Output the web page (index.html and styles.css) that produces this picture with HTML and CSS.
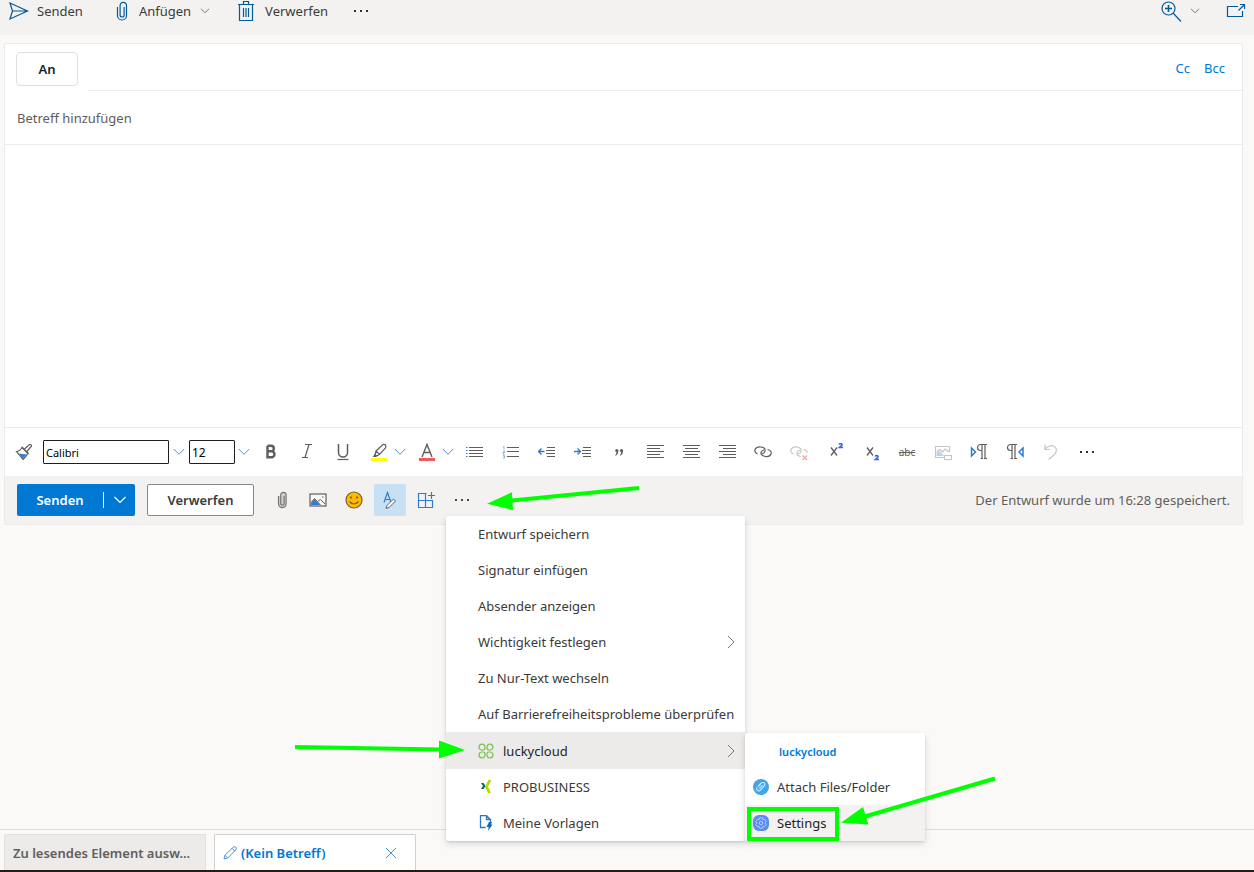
FILE: index.html
```html
<!DOCTYPE html>
<html lang="de">
<head>
<meta charset="utf-8">
<meta name="viewport" content="width=device-width, initial-scale=1">
<title>(Kein Betreff)</title>
<link rel="stylesheet" href="styles.css">
</head>
<body>
<header class="topbar">
  <button class="command command-send" type="button">
    <svg width="20" height="20" viewBox="0 0 20 20" class="line-blue"><path d="M1 2 18.500 10 1 18 3.500 10ZM3.500 10H18"/></svg>
    Senden
  </button>
  <button class="command command-attach" type="button">
    <svg width="12" height="20" viewBox="0 0 12 20" class="line-blue"><path d="M1.500 6V14.500a4.500 4.500 0 0 0 9 0V4.500a3.200 3.200 0 0 0-6.400 0V14a2 2 0 0 0 4 0V6" /></svg>
    Anfügen
    <svg width="10" height="6" viewBox="0 0 10 6" class="line-gray"><path d="M1 .8 5 4.800 9 .8"/></svg>
  </button>
  <button class="command command-discard" type="button">
    <svg width="18" height="22" viewBox="0 0 18 22" class="line-blue"><path d="M1 4.500H17M6.500 4V1.500H11.500V4M2.500 4.500V20.500H15.500V4.500M6.500 8V17M9 8V17M11.500 8V17"/></svg>
    Verwerfen
  </button>
  <button class="command" type="button" aria-label="Weitere Befehle">
    <svg width="16" height="4" viewBox="0 0 16 4" fill="#323130"><rect x="0" y="1" width="2" height="2"/><rect x="6" y="1" width="2" height="2"/><rect x="12" y="1" width="2" height="2"/></svg>
  </button>
  <button class="command command-zoom" type="button" aria-label="Zoom">
    <svg width="21" height="21" viewBox="0 0 21 21" class="line-blue"><circle cx="7.500" cy="7.500" r="6.500"/><path d="M12 12 20 20.500"/><path d="M4 7.500H11M7.500 4V11" stroke-width="1.600"/></svg>
    <svg width="10" height="6" viewBox="0 0 10 6" class="line-gray"><path d="M1 .8 5 4.800 9 .8"/></svg>
  </button>
  <button class="command" type="button" aria-label="In neuem Fenster öffnen">
    <svg width="20" height="16" viewBox="0 0 20 16" class="line-blue"><path d="M12 3.500H1.500V13.500H16.500V8M12.500 7.500 18 2M14 1.500H18.500V6"/></svg>
  </button>
</header>

<main class="page">
  <form class="compose">
    <div class="to-row">
      <button class="to-button" type="button">An</button>
      <div class="to-field">
        <input class="plain-input" type="text" aria-label="An">
        <a class="cc-link" href="#cc">Cc</a>
        <a class="cc-link" href="#bcc">Bcc</a>
      </div>
    </div>
    <input class="plain-input subject" type="text" placeholder="Betreff hinzufügen" aria-label="Betreff">
    <textarea class="message" aria-label="Nachrichtentext"></textarea>

    <div class="format-bar">
      <button class="brush" type="button" aria-label="Format übertragen">
        <svg width="18" height="18" viewBox="0 0 18 18" class="line-ink"><path d="M1.500 8.500Q5 8 7.500 4.500L13 10Q11 14 8 16.500Z" fill="#fff"/><path d="M4 10.500 11.500 11.500 8 15.500Z" fill="#2b7cd3" stroke="none"/><path d="M6.500 4 13.500 11M9.500 6 14.500 1.500q2-.5 2 1.500L12 8.500"/></svg>
      </button>
      <input class="font-box font-name" type="text" value="Calibri" aria-label="Schriftart">
      <button class="chevron-name" type="button" aria-label="Schriftart wählen"><svg width="12" height="8" viewBox="0 0 12 8" class="line-light"><path d="M.8 1 6 6.300 11.200 1"/></svg></button>
      <input class="font-box font-size" type="text" value="12" aria-label="Schriftgrad">
      <button class="chevron-size" type="button" aria-label="Schriftgrad wählen"><svg width="12" height="8" viewBox="0 0 12 8" class="line-light"><path d="M.8 1 6 6.300 11.200 1"/></svg></button>
      <button class="tool" type="button" aria-label="Fett"><svg width="18" height="18" viewBox="0 0 18 18" fill="none" stroke="#605e5c" stroke-width="2.400"><path d="M5.500 2.700V14.300H9.500a3 3 0 0 0 0-6H5.500M5.500 8.300H9a2.800 2.800 0 0 0 0-5.600H5.500"/></svg></button>
      <button class="tool" type="button" aria-label="Kursiv"><svg width="18" height="18" viewBox="0 0 18 18" class="line-ink"><path d="M7 1.500H14M4 14.500H10M11 1.500 7 14.500"/></svg></button>
      <button class="tool" type="button" aria-label="Unterstrichen"><svg width="18" height="18" viewBox="0 0 18 18" class="line-ink"><path d="M4.500 1V9.500a4.500 4.500 0 0 0 9 0V1" stroke-width="1.500"/><path d="M3.500 16.500H14.500"/></svg></button>
      <span class="split">
        <button type="button" aria-label="Texthervorhebung"><svg width="18" height="18" viewBox="0 0 18 18" class="line-ink"><rect x="1" y="15" width="16" height="3" fill="#ffff00" stroke="none"/><path d="M6 8 13 1.500q4-.5 2.500 3.500L9.500 11.500ZM6 8 5 11.500 6.500 13 9.500 11.500"/><path d="M5 11 2.500 14H6L7 12.500Z" fill="#605e5c" stroke="none"/></svg></button>
        <button type="button" aria-label="Hervorhebungsfarbe"><svg width="12" height="8" viewBox="0 0 12 8" class="line-light"><path d="M.8 1 6 6.300 11.200 1"/></svg></button>
      </span>
      <span class="split">
        <button type="button" aria-label="Schriftfarbe"><svg width="18" height="18" viewBox="0 0 18 18" class="line-ink"><rect x="1" y="15" width="16" height="3" fill="#ef5b56" stroke="none"/><path d="M4 14 9 1.500 14 14M5.800 9.500H12.200" stroke-width="1.400"/></svg></button>
        <button type="button" aria-label="Schriftfarbe wählen"><svg width="12" height="8" viewBox="0 0 12 8" class="line-light"><path d="M.8 1 6 6.300 11.200 1"/></svg></button>
      </span>
      <button class="tool" type="button" aria-label="Aufzählung"><svg width="18" height="18" viewBox="0 0 18 18" class="line-ink"><path d="M3 4.500H17M3 7.500H17M3 10.500H17M3 13.500H17"/><path d="M0 4.500H1.500M0 7.500H1.500M0 10.500H1.500M0 13.500H1.500" stroke="#2b7cd3"/></svg></button>
      <button class="tool" type="button" aria-label="Nummerierung"><svg width="18" height="18" viewBox="0 0 18 18" class="line-ink"><path d="M5 4.500H17M5 8.500H17M5 13.500H17"/><path d="M1 4 2 3.500V6.500M1 8H2.500V9.500H1V11H2.500M1 12.500H2.500V15H1M1.500 13.700H2.500" stroke="#6fa2e0" stroke-width=".8"/></svg></button>
      <button class="tool" type="button" aria-label="Einzug verkleinern"><svg width="18" height="18" viewBox="0 0 18 18" class="line-ink"><path d="M9 4.500H17M8 7.500H17M8 10.500H17M9 13.500H17"/><path d="M.5 8.500H6.500M3.500 5.500.5 8.500 3.500 11.500" stroke="#2b7cd3" stroke-width="1.300"/></svg></button>
      <button class="tool" type="button" aria-label="Einzug vergrößern"><svg width="18" height="18" viewBox="0 0 18 18" class="line-ink"><path d="M9 4.500H17M8 7.500H17M8 10.500H17M9 13.500H17"/><path d="M0 8.500H6.500M3.500 5.500 6.500 8.500 3.500 11.500" stroke="#2b7cd3" stroke-width="1.300"/></svg></button>
      <button class="tool" type="button" aria-label="Zitat"><svg width="18" height="18" viewBox="0 0 18 18" fill="#605e5c"><circle cx="6.800" cy="7.500" r="1.600"/><circle cx="11.500" cy="7.500" r="1.600"/><path d="M6.500 8H8.400Q8.500 11 5.500 13V12Q6.700 10.500 6.500 8ZM11.200 8H13.100Q13.200 11 10.200 13V12Q11.400 10.500 11.200 8Z"/></svg></button>
      <button class="tool" type="button" aria-label="Linksbündig"><svg width="18" height="18" viewBox="0 0 18 18" class="line-ink"><path d="M1 2.500H18M1 5.500H14M1 8.500H18M1 11.500H14M1 14.500H18"/></svg></button>
      <button class="tool" type="button" aria-label="Zentriert"><svg width="18" height="18" viewBox="0 0 18 18" class="line-ink"><path d="M1 2.500H18M3 5.500H16M1 8.500H18M3 11.500H16M1 14.500H18"/></svg></button>
      <button class="tool" type="button" aria-label="Rechtsbündig"><svg width="18" height="18" viewBox="0 0 18 18" class="line-ink"><path d="M1 2.500H18M5 5.500H18M1 8.500H18M5 11.500H18M1 14.500H18"/></svg></button>
      <button class="tool" type="button" aria-label="Link einfügen"><svg width="18" height="18" viewBox="0 0 18 18" class="line-ink"><path d="M3.500 11Q0 9.500 1 6.500 2.500 3.500 7 4q4.500.5 4 4-.5 2.500-3 2.500M13.500 6.500q4.500 1 3.500 4.500-1 3-5.500 2.500Q6.500 12.500 7 9.500q.5-2 3-2.500"/></svg></button>
      <button class="tool" type="button" aria-label="Link entfernen" disabled><svg width="18" height="18" viewBox="0 0 18 18" class="line-faint"><path d="M3.500 11Q0 9.500 1 6.500 2.500 3.500 7 4q4.500.5 4 4-.5 2.500-3 2.500M13.500 6.500q4 1 3.700 3.500M10.500 13.500Q6.500 12.500 7 9.500q.5-2 3-2.500"/><path d="M12.500 12.500 17 17M17 12.500 12.500 17" stroke="#f0b0a8" stroke-width="1.500"/></svg></button>
      <button class="tool" type="button" aria-label="Hochgestellt"><svg width="18" height="18" viewBox="0 0 18 18" class="line-ink"><path d="M5 4.500 11 12.500M11 4.500 5 12.500" stroke-width="1.300"/><path d="M13 1.500q.5-1 1.800-1 1.500.2 1.200 1.500L13.300 4.500H17" stroke="#2b6cd3" stroke-width="1.500"/></svg></button>
      <button class="tool" type="button" aria-label="Tiefgestellt"><svg width="18" height="18" viewBox="0 0 18 18" class="line-ink"><path d="M5 4.500 11 12.500M11 4.500 5 12.500" stroke-width="1.300"/><path d="M13 13.500q.5-1 1.800-1 1.500.2 1.200 1.500L13.300 16.500H17" stroke="#2b6cd3" stroke-width="1.500"/></svg></button>
      <button class="tool strike" type="button" aria-label="Durchgestrichen"><s>abc</s></button>
      <button class="tool" type="button" aria-label="Bild formatieren" disabled><svg width="18" height="18" viewBox="0 0 18 18" class="line-faint"><path d="M10 14.500H1.500V3.500H15.500V9"/><path d="M2.500 13V9L5 7.500 10 13Z" fill="#b9d3ef" stroke="none"/><path d="M3 8 6 6.500 8.500 9 11 6 15 9"/><rect x="10.500" y="12.500" width="7" height="4"/></svg></button>
      <button class="tool" type="button" aria-label="Von links nach rechts"><svg width="18" height="18" viewBox="0 0 18 18" class="line-ink"><path d="M1.500 5 5.500 9 1.500 13Z" stroke="#2b7cd3" stroke-width="1.500"/><path d="M12 15.500V2M15 15.500V2M17 1.500H10.500a3 3 0 0 0 0 6H12M10.500 15.500H13M14 15.500H17"/></svg></button>
      <button class="tool" type="button" aria-label="Von rechts nach links"><svg width="18" height="18" viewBox="0 0 18 18" class="line-ink"><path d="M17 5 13 9 17 13Z" stroke="#2b7cd3" stroke-width="1.500"/><path d="M6 15.500V2M9 15.500V2M11 1.500H4.500a3 3 0 0 0 0 6H6M4.500 15.500H7M8 15.500H11"/></svg></button>
      <button class="tool" type="button" aria-label="Rückgängig" disabled><svg width="18" height="18" viewBox="0 0 18 18" class="line-faint"><path d="M3 1.500V6.500H8M3 6Q7.500 1.500 11.500 3q4 2 2.500 6-1 2.500-7.500 7.500"/></svg></button>
      <button class="tool" type="button" aria-label="Weitere Formatierung"><svg width="16" height="4" viewBox="0 0 16 4" fill="#323130"><rect x="1" y="1" width="2" height="2"/><rect x="7" y="1" width="2" height="2"/><rect x="13" y="1" width="2" height="2"/></svg></button>
    </div>

    <div class="send-bar">
      <span class="send-split">
        <button class="send-main" type="button">Senden</button>
        <button class="send-more" type="button" aria-label="Sendeoptionen"><svg width="14" height="8" viewBox="0 0 14 8" fill="none" stroke="#fff" stroke-width="1.200"><path d="M1.500 1 7 6.500 12.500 1"/></svg></button>
      </span>
      <button class="discard" type="button">Verwerfen</button>
      <div class="actions">
        <button class="action" type="button" aria-label="Anfügen"><svg width="10" height="18" viewBox="0 0 10 18" fill="#d2d0ce" stroke="#797775" stroke-width="1.200"><path d="M1.500 5V12.800a3.800 3.800 0 0 0 7.600 0V4a2.700 2.700 0 0 0-5.400 0V12.500a1.700 1.700 0 0 0 3.400 0V5"/></svg></button>
        <button class="action" type="button" aria-label="Bild einfügen"><svg width="18" height="18" viewBox="0 0 18 18" class="line-ink"><rect x="1" y="3" width="16" height="12" fill="#f8f8f8"/><path d="M2 12 5.500 8 11 14H2Z" fill="#2b7cd3" stroke="none"/><path d="M2 11.500 5.500 7.500 11.500 14M8.500 10.500 11.500 8.500 16 13" stroke-width="1"/><path d="M13 6H14.500"/></svg></button>
        <button class="action" type="button" aria-label="Emoji"><svg width="18" height="18" viewBox="0 0 18 18"><circle cx="9" cy="9" r="8" fill="#ffb900" stroke="#795f2e" stroke-width="1.200"/><circle cx="6" cy="6.500" r="1.100" fill="#605e5c"/><circle cx="12" cy="6.500" r="1.100" fill="#605e5c"/><path d="M4.500 10.500q4.500 5 9 0" fill="none" stroke="#605e5c" stroke-width="1.200"/></svg></button>
        <button class="action action-on" type="button" aria-label="Formatierungsoptionen" aria-pressed="true"><svg width="18" height="18" viewBox="0 0 18 18" fill="none"><path d="M3 11.500 6.500 1.500 10 11.500M4.200 8.500H9" stroke="#2b7cd3" stroke-width="1.200"/><path d="M6 14.500 12.500 8 14.500 10 8 16.500 5 17.300Z" stroke="#605e5c" fill="#fff"/></svg></button>
        <button class="action" type="button" aria-label="Add-Ins"><svg width="18" height="18" viewBox="0 0 18 18" fill="none" stroke="#2b7cd3" stroke-width="1.200"><path d="M9.500 2.500H1.500V16.500H15.500V9.500H1.500M8.500 2.500V16.500M11 4.500H18M14.500 1V8"/></svg></button>
        <div class="more">
          <button class="action" type="button" aria-label="Weitere Optionen" aria-expanded="true"><svg width="16" height="4" viewBox="0 0 16 4" fill="#484644"><rect x="1" y="1" width="2" height="2"/><rect x="7" y="1" width="2" height="2"/><rect x="13" y="1" width="2" height="2"/></svg></button>
          <div class="menu" role="menu">
            <button class="menu-item" type="button" role="menuitem">Entwurf speichern</button>
            <button class="menu-item" type="button" role="menuitem">Signatur einfügen</button>
            <button class="menu-item" type="button" role="menuitem">Absender anzeigen</button>
            <button class="menu-item" type="button" role="menuitem">Wichtigkeit festlegen<svg class="menu-arrow line-gray" width="8" height="14" viewBox="0 0 8 14"><path d="M1 1 7 7 1 13"/></svg></button>
            <button class="menu-item" type="button" role="menuitem">Zu Nur-Text wechseln</button>
            <button class="menu-item" type="button" role="menuitem">Auf Barrierefreiheitsprobleme überprüfen</button>
            <div class="menu-parent">
              <button class="menu-item menu-item-icon menu-item-open" type="button" role="menuitem">
                <svg width="16" height="16" viewBox="0 0 16 16" fill="none" stroke="#7ac251" stroke-width="1.200"><path d="M7 5V3.500A3 3 0 1 0 3.500 7H5Q7 7 7 5M9 5V3.500A3 3 0 1 1 12.500 7H11Q9 7 9 5M7 11V12.500A3 3 0 1 1 3.500 9H5Q7 9 7 11M9 11V12.500A3 3 0 1 0 12.500 9H11Q9 9 9 11"/></svg>
                luckycloud
                <svg class="menu-arrow line-gray" width="8" height="14" viewBox="0 0 8 14"><path d="M1 1 7 7 1 13"/></svg>
              </button>
              <svg class="pointer" width="1" height="1" viewBox="0 0 1 1"><path d="M-151 15 -6 17.500" stroke-width="4"/><path d="M-7 8.500V26.500L19 18Z" stroke="none"/></svg>
              <div class="submenu" role="menu">
                <div class="submenu-title">luckycloud</div>
                <button class="submenu-item" type="button" role="menuitem">
                  <svg width="16" height="16" viewBox="0 0 16 16"><circle cx="8" cy="8" r="8" fill="#41a5ee"/><path d="M5 7.500 8.500 3.800q2.500-1 3.200.8.500 1.300-.7 2.600L7 11.400q-1.800 1-3-.4-.8-1.200.4-2.600M6.300 9.500 9.500 6" fill="none" stroke="#d8eefc" stroke-width="1.100"/></svg>
                  Attach Files/Folder
                </button>
                <div class="menu-parent">
                  <button class="submenu-item submenu-item-on" type="button" role="menuitem">
                    <svg width="16" height="16" viewBox="0 0 16 16"><rect width="16" height="16" rx="6" fill="#5b8cf5"/><g fill="none" stroke="#b9cffc"><circle cx="8" cy="8" r="1.800"/><path d="M6.700 2.800H9.300L9.900 4.500 11.500 4.300 13.200 6.500 12 8 13.200 9.500 11.500 11.700 9.900 11.500 9.300 13.200H6.700L6.100 11.500 4.500 11.700 2.800 9.500 4 8 2.800 6.500 4.500 4.300 6.100 4.500Z"/></g></svg>
                    Settings
                  </button>
                  <svg class="pointer" width="1" height="1" viewBox="0 0 1 1"><rect x="4" y="4" width="88" height="30" fill="none" stroke-width="4"/><path d="M250-26.500 120 11.500" stroke-width="4"/><path d="M96 17.700 118 2 123.500 19.500Z" stroke="none"/></svg>
                </div>
              </div>
            </div>
            <button class="menu-item menu-item-icon" type="button" role="menuitem">
              <svg width="16" height="16" viewBox="0 0 16 16"><path d="M3 4H5.500L7.500 7 5.500 10H3L5 7Z" fill="#00696c"/><path d="M10.500 1H13.500L10 7.500 13 14H10L7 7.500Z" fill="#b7d800"/></svg>
              PROBUSINESS
            </button>
            <button class="menu-item menu-item-icon" type="button" role="menuitem">
              <svg width="16" height="16" viewBox="0 0 16 16" fill="none"><path d="M7.500 12.500H2.500V.7H8.500L12.500 4.500V7M8.500 1V4.500H12.500" stroke="#2d7ab8" stroke-width="1.300"/><path d="M11 7H14L13 9.500H14.500L10 16 10.700 12H8.500Z" fill="#1665a8"/></svg>
              Meine Vorlagen
            </button>
          </div>
          <svg class="pointer" width="1" height="1" viewBox="0 0 1 1"><path d="M193 4 66 16.500" stroke-width="4"/><path d="M41 19.700 66 8.300 67 26Z" stroke="none"/></svg>
        </div>
      </div>
      <span class="status">Der Entwurf wurde um 16:28 gespeichert.</span>
    </div>
  </form>
</main>

<nav class="tabs" aria-label="Geöffnete Elemente">
  <button class="tab" type="button">Zu lesendes Element ausw...</button>
  <div class="tab tab-active">
    <button class="tab-open" type="button">
      <svg width="14" height="14" viewBox="0 0 14 14" class="line-light"><path d="M1 13 2 9.300 10 1.300Q12-.3 13.200 1.500 13.800 3 12.700 4L4.700 12ZM2 9.300 4.700 12M9 2.300 11.700 5"/></svg>
      (Kein Betreff)
    </button>
    <button class="tab-close" type="button" aria-label="Schließen"><svg width="12" height="12" viewBox="0 0 12 12" class="line-light"><path d="M1 1 11 11M11 1 1 11"/></svg></button>
  </div>
</nav>
</body>
</html>
```
FILE: styles.css
```css
* { box-sizing: border-box; }

body {
  margin: 0;
  min-height: 100vh;
  display: flex;
  flex-direction: column;
  background: #faf9f8;
  border-bottom: 2px solid #251c1a;
  color: #3b3a39;
  font: 13px/20px "Noto Sans", "Open Sans", sans-serif;
}

button, input, textarea {
  margin: 0;
  padding: 0;
  border: 0;
  background: none;
  color: inherit;
  font: inherit;
}

button {
  display: flex;
  align-items: center;
  justify-content: center;
  white-space: nowrap;
}

svg { display: block; flex: none; }

.line-blue, .line-gray, .line-ink, .line-light, .line-faint { fill: none; stroke-width: 1.200; }
.line-blue { stroke: #005a9e; }
.line-gray { stroke: #797775; stroke-width: 1; }
.line-ink { stroke: #605e5c; }
.line-light { stroke: #4a8fd8; stroke-width: 1; }
.line-faint { stroke: #c8c6c4; }

.topbar {
  display: flex;
  align-items: center;
  height: 35px;
  padding: 0 8px 13px 9px;
  background: #f3f2f1;
}
.command { gap: 8px; height: 22px; }
.command-send { margin-right: 33px; }
.command-attach { gap: 11px; margin-right: 27px; }
.command-attach svg:last-child { margin-left: -2px; }
.command-discard { gap: 10px; margin-right: 26px; }
.command-zoom { margin-left: auto; margin-right: 26px; }

.page { flex: 1; padding: 8px 11px 0 4px; }

.compose {
  border: 1px solid #edebe9;
  border-radius: 2px;
  background: #fff;
}

.to-row {
  display: flex;
  align-items: stretch;
  gap: 10px;
  height: 47px;
  padding-left: 11px;
}
.to-button {
  width: 62px;
  height: 34px;
  margin-top: 8px;
  border: 1px solid #e1dfdd;
  border-radius: 4px;
  color: #201f1e;
  font-weight: 600;
}
.to-field {
  flex: 1;
  display: flex;
  align-items: center;
  gap: 14px;
  padding: 2px 17px 0 0;
  border-bottom: 1px solid #edebe9;
}
.plain-input { flex: 1; min-width: 0; outline: 0; }
.cc-link { color: #0078d4; text-decoration: none; }

.subject {
  display: block;
  width: 100%;
  height: 54px;
  padding: 0 12px;
  border-bottom: 1px solid #edebe9;
}
.subject::placeholder { color: #605e5c; opacity: 1; }

.message {
  display: block;
  width: 100%;
  height: 282px;
  padding: 12px;
  outline: 0;
  resize: none;
}

.format-bar {
  display: flex;
  align-items: center;
  height: 49px;
  padding-left: 11px;
  border-top: 1px solid #edebe9;
}
.brush { width: 16px; margin-right: 11px; }
.font-box {
  height: 24px;
  padding: 0 2px;
  border: 1px solid #201f1e;
  border-radius: 1px;
  font-size: 11px;
  color: #000;
}
.font-name { width: 126px; }
.font-size { width: 46px; font-size: 12px; }
.chevron-name { width: 20px; height: 24px; }
.chevron-size { width: 18px; height: 24px; }
.tool { width: 36px; height: 32px; }
.split { display: flex; align-items: center; gap: 6px; padding: 0 3px 0 9px; }
.strike { color: #605e5c; font-size: 10px; }

.send-bar {
  display: flex;
  align-items: center;
  gap: 12px;
  height: 48px;
  padding: 0 12px;
  background: #f3f2f1;
}
.send-split {
  display: flex;
  align-items: center;
  width: 118px;
  height: 32px;
  border-radius: 2px;
  background: #0078d4;
  color: #fff;
}
.send-main { flex: 1; height: 32px; font-weight: 600; }
.send-more { width: 32px; height: 16px; border-left: 1px solid #fff; }
.discard {
  width: 107px;
  height: 32px;
  border: 1px solid #8a8886;
  border-radius: 2px;
  background: #fff;
  font-weight: 600;
}
.actions { display: flex; gap: 4px; }
.action { width: 32px; height: 32px; border-radius: 2px; }
.action-on { background: #c7e0f4; }
.status { margin-left: auto; color: #605e5c; white-space: nowrap; }

.more, .menu-parent { position: relative; }
.menu, .submenu {
  position: absolute;
  z-index: 2;
  border-radius: 2px;
  background: #fff;
  box-shadow: 0 3px 7px rgba(0, 0, 0, .13), 0 1px 2px rgba(0, 0, 0, .11);
}
.menu { top: 100%; left: 0; width: 299px; }
.menu-item {
  justify-content: flex-start;
  width: 100%;
  height: 36px;
  padding: 0 10px 0 32px;
}
.menu-item-icon { gap: 9px; }
.menu-item-open { height: 37px; background: #edebe9; color: #201f1e; }
.menu-arrow { margin-left: auto; }
.submenu { top: 1px; left: 100%; width: 180px; }
.submenu-title {
  padding: 9px 34px 7px;
  color: #0078d4;
  font-size: 11px;
  font-weight: 600;
}
.submenu-item {
  justify-content: flex-start;
  gap: 8px;
  width: 100%;
  height: 36px;
  padding: 0 8px;
}
.submenu-item-on { background: #f3f2f1; color: #201f1e; }

.pointer {
  position: absolute;
  z-index: 3;
  top: 0;
  left: 0;
  overflow: visible;
  fill: #00ff00;
  stroke: #00ff00;
  pointer-events: none;
}

.tabs {
  display: flex;
  gap: 8px;
  padding: 4px 4px 0;
  border-top: 1px solid #e1dfdd;
}
.tab {
  display: flex;
  align-items: center;
  justify-content: space-between;
  width: 202px;
  height: 36px;
  padding: 0 8px;
  border: 1px solid #e1dfdd;
  border-bottom: 0;
  border-radius: 2px 2px 0 0;
  background: #edebe9;
  color: #605e5c;
  font-weight: 600;
}
.tab-active { border-color: #d2d0ce; background: #fff; color: #0078d4; }
.tab-open { gap: 4px; }
.tab-close { width: 32px; height: 32px; }
```
